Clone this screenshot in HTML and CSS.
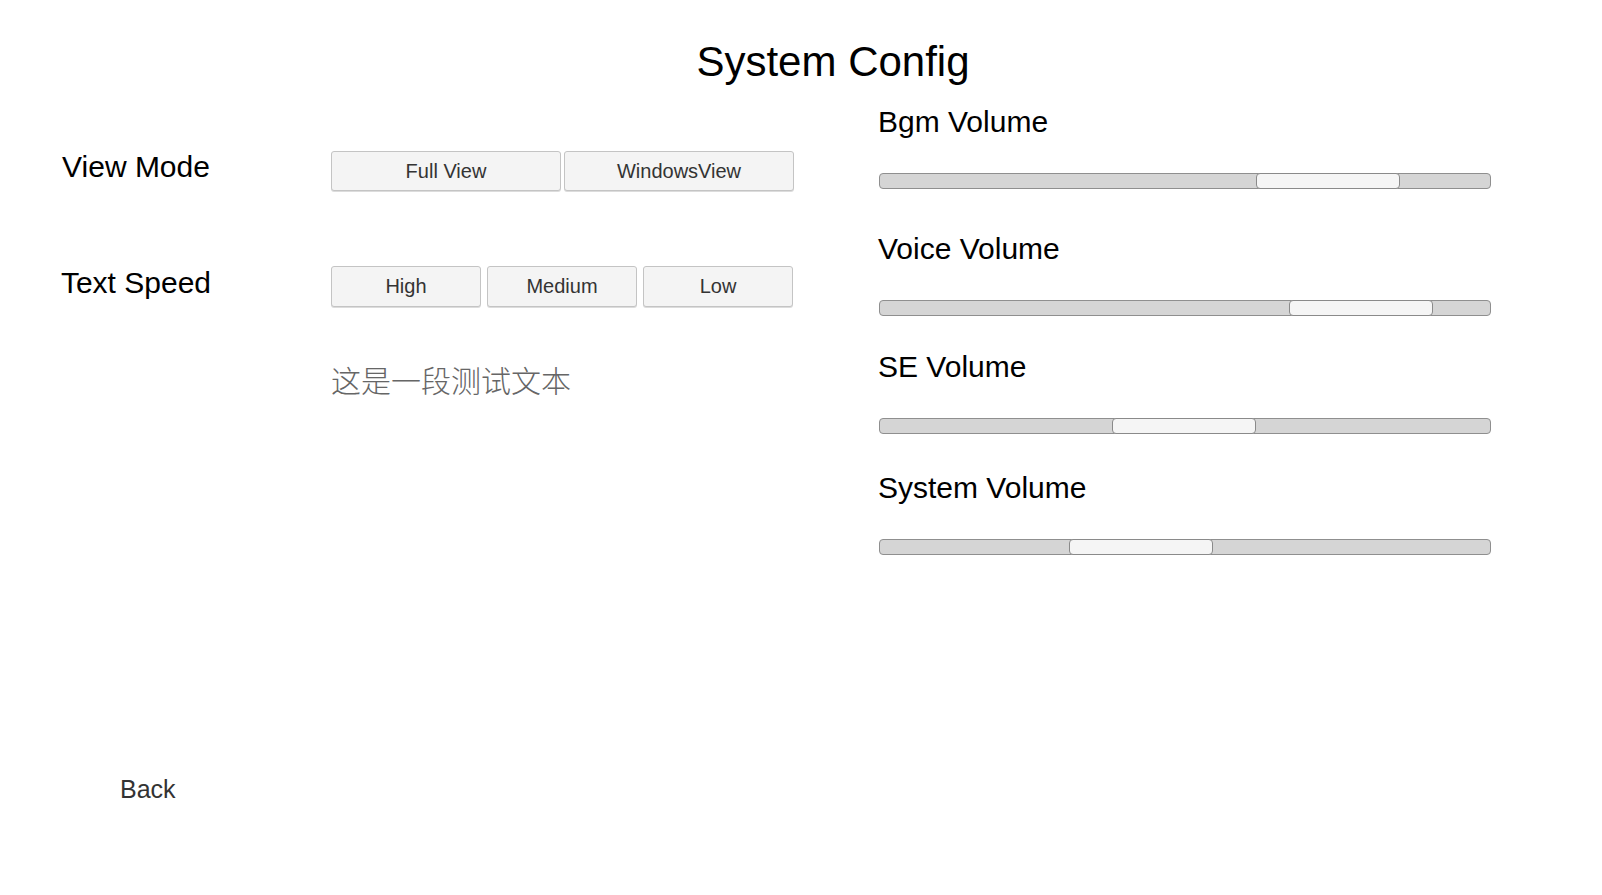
FILE: index.html
```html
<!DOCTYPE html>
<html lang="zh">
<head>
<meta charset="utf-8">
<title>System Config</title>
<link rel="stylesheet" href="styles.css">
</head>
<body>
<div class="page">
  <h1 class="title">System Config</h1>
  <div class="main">
    <div class="left">
      <div class="row row-view">
        <div class="label">View Mode</div>
        <div class="controls two">
          <button class="btn">Full View</button>
          <button class="btn">WindowsView</button>
        </div>
      </div>
      <div class="row row-speed">
        <div class="label">Text Speed</div>
        <div class="controls three">
          <button class="btn">High</button>
          <button class="btn">Medium</button>
          <button class="btn">Low</button>
        </div>
      </div>
      <div class="row row-sample">
        <div class="label"></div>
        <div class="sample">这是一段测试文本</div>
      </div>
    </div>
    <div class="right">
      <div class="vol vol-bgm">
        <div class="vol-label">Bgm Volume</div>
        <div class="track"><div class="handle" style="left: 61.6%"></div></div>
      </div>
      <div class="vol vol-voice">
        <div class="vol-label">Voice Volume</div>
        <div class="track"><div class="handle" style="left: 67.0%"></div></div>
      </div>
      <div class="vol vol-se">
        <div class="vol-label">SE Volume</div>
        <div class="track"><div class="handle" style="left: 38.0%"></div></div>
      </div>
      <div class="vol vol-system">
        <div class="vol-label">System Volume</div>
        <div class="track"><div class="handle" style="left: 31.0%"></div></div>
      </div>
    </div>
  </div>
  <div class="footer">
    <span class="back">Back</span>
  </div>
</div>
</body>
</html>
```
FILE: styles.css
```css
html, body {
  margin: 0;
  padding: 0;
  background: #ffffff;
}
body {
  font-family: "Liberation Sans", Arial, sans-serif;
  color: #000;
}
.page {
  width: 1602px;
  height: 895px;
  display: flex;
  flex-direction: column;
  overflow: hidden;
}
.title {
  margin: 0;
  padding: 39px 0 0 64px;
  font-size: 42px;
  font-weight: normal;
  line-height: 46px;
  text-align: center;
}
.main {
  display: flex;
  flex-direction: row;
}
.left {
  width: 879px;
  display: flex;
  flex-direction: column;
  padding-top: 66px;
}
.row {
  display: grid;
  grid-template-columns: 272px 463px;
  column-gap: 59px;
  align-items: center;
}
.row-speed {
  margin-top: 75px;
}
.row-sample {
  margin-top: 54px;
}
.label {
  font-size: 30px;
  line-height: 36px;
  text-align: center;
  margin-top: -8px;
}
.controls {
  display: flex;
}
.controls.two {
  gap: 3px;
}
.controls.three {
  gap: 6px;
  margin-right: 1px;
}
.btn {
  flex: 1 1 0;
  height: 40px;
  margin: 0;
  padding: 0;
  background: #f4f4f4;
  border: 1px solid #c4c4c4;
  border-radius: 3px;
  font-family: "Liberation Sans", Arial, sans-serif;
  font-size: 20px;
  color: #333;
  box-shadow: 0 1px 0 #dcdcdc;
}
.three .btn {
  height: 41px;
}
.sample {
  font-family: "Noto Sans CJK SC", sans-serif;
  font-size: 30px;
  line-height: 36px;
  color: #666;
  font-weight: 300;
}
.right {
  width: 612px;
  display: flex;
  flex-direction: column;
  padding-top: 19px;
}
.vol-label {
  font-size: 30px;
  line-height: 36px;
  margin-left: -1px;
}
.track {
  position: relative;
  margin-top: 33px;
  height: 14px;
  background: #d5d5d5;
  border: 1px solid #8f8f8f;
  border-radius: 4px;
}
.handle {
  position: absolute;
  top: -1px;
  width: 142px;
  height: 14px;
  background: #f5f5f5;
  border: 1px solid #8a8a8a;
  border-radius: 4px;
}
.vol-voice {
  margin-top: 42px;
}
.vol-se {
  margin-top: 33px;
}
.vol-system {
  margin-top: 36px;
}
.footer {
  margin-top: auto;
  padding: 0 0 91px 120px;
}
.back {
  font-size: 25px;
  line-height: 30px;
  color: #333;
}
```
